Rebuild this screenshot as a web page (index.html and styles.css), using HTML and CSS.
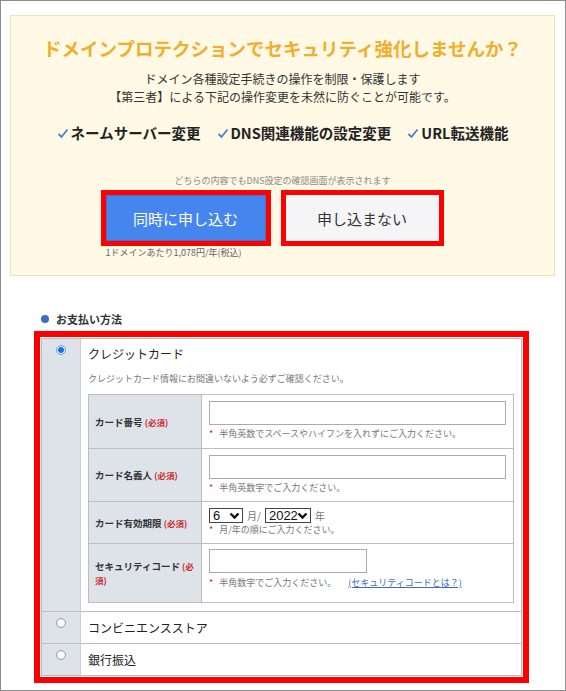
FILE: index.html
```html
<!DOCTYPE html>
<html lang="ja">
<head>
  <meta charset="UTF-8" />
  <meta name="viewport" content="width=device-width, initial-scale=1" />
  <title>ドメインプロテクション / お支払い方法</title>
  <link rel="stylesheet" href="styles.css">
</head>
<body>
  <div class="page">

    <section class="promo">
      <h2 class="promo-title">ドメインプロテクションでセキュリティ強化しませんか？</h2>
      <p class="promo-desc">ドメイン各種設定手続きの操作を制限・保護します<br>【第三者】による下記の操作変更を未然に防ぐことが可能です。</p>

      <ul class="features">
        <li><svg class="check" width="12" height="11" viewBox="0 0 12 11"><path d="M1.5 6 L4.5 9 L10.5 1.5" fill="none" stroke="#4a7fd0" stroke-width="1.8"/></svg>ネームサーバー変更</li>
        <li><svg class="check" width="12" height="11" viewBox="0 0 12 11"><path d="M1.5 6 L4.5 9 L10.5 1.5" fill="none" stroke="#4a7fd0" stroke-width="1.8"/></svg>DNS関連機能の設定変更</li>
        <li><svg class="check" width="12" height="11" viewBox="0 0 12 11"><path d="M1.5 6 L4.5 9 L10.5 1.5" fill="none" stroke="#4a7fd0" stroke-width="1.8"/></svg>URL転送機能</li>
      </ul>

      <p class="promo-note">どちらの内容でもDNS設定の確認画面が表示されます</p>

      <div class="actions">
        <div class="action">
          <div class="highlight">
            <button class="btn btn-primary">同時に申し込む</button>
          </div>
          <p class="price">1ドメインあたり1,078円/年(税込)</p>
        </div>
        <div class="action">
          <div class="highlight">
            <button class="btn btn-secondary">申し込まない</button>
          </div>
        </div>
      </div>
    </section>

    <section class="payment">
      <h3 class="payment-heading">お支払い方法</h3>

      <div class="highlight highlight-lg">
        <table class="pay-table">
          <tr class="pay-row">
            <td class="pay-radio"><input type="radio" name="pay" checked></td>
            <td class="pay-body">
              <div class="pay-title">クレジットカード</div>
              <p class="pay-sub">クレジットカード情報にお間違いないよう必ずご確認ください。</p>

              <table class="card-table">
                <tr class="row-a">
                  <th>カード番号 <span class="req">(必須)</span></th>
                  <td>
                    <input type="text" class="field field-wide">
                    <p class="hint"><span class="star">*</span>半角英数でスペースやハイフンを入れずにご入力ください。</p>
                  </td>
                </tr>
                <tr class="row-b">
                  <th>カード名義人 <span class="req">(必須)</span></th>
                  <td>
                    <input type="text" class="field field-wide">
                    <p class="hint"><span class="star">*</span>半角英数字でご入力ください。</p>
                  </td>
                </tr>
                <tr class="row-c">
                  <th>カード有効期限 <span class="req">(必須)</span></th>
                  <td>
                    <div class="expiry">
                      <span class="select select-month">
                        <select><option>6</option></select>
                        <svg width="11" height="8" viewBox="0 0 11 8"><path d="M1.5 1.5 L5.5 5.5 L9.5 1.5" fill="none" stroke="#111" stroke-width="2.4"/></svg>
                      </span>
                      <span class="unit">月/</span>
                      <span class="select select-year">
                        <select><option>2022</option></select>
                        <svg width="11" height="8" viewBox="0 0 11 8"><path d="M1.5 1.5 L5.5 5.5 L9.5 1.5" fill="none" stroke="#111" stroke-width="2.4"/></svg>
                      </span>
                      <span class="unit">年</span>
                    </div>
                    <p class="hint hint-tight"><span class="star">*</span>月/年の順にご入力ください。</p>
                  </td>
                </tr>
                <tr class="row-d">
                  <th>セキュリティコード <span class="req">(必</span><br><span class="req">須)</span></th>
                  <td>
                    <input type="text" class="field field-short">
                    <p class="hint"><span class="star">*</span>半角数字でご入力ください。<a href="#" class="hint-link">(セキュリティコードとは？)</a></p>
                  </td>
                </tr>
              </table>
            </td>
          </tr>
          <tr class="pay-row pay-row-sub">
            <td class="pay-radio"><input type="radio" name="pay"></td>
            <td class="pay-body">コンビニエンスストア</td>
          </tr>
          <tr class="pay-row pay-row-sub">
            <td class="pay-radio"><input type="radio" name="pay"></td>
            <td class="pay-body">銀行振込</td>
          </tr>
        </table>
      </div>
    </section>

  </div>
</body>
</html>
```

FILE: styles.css
```css
body {
  margin: 0;
  font-family: 'Noto Sans CJK JP', 'Noto Sans', sans-serif;
  color: #333;
  background: #fff;
}

.page {
  height: 691px;
  border: 1px solid #8c8c8c;
  box-sizing: border-box;
  overflow: hidden;
}

/* ドメインプロテクション */
.promo {
  margin: 14px 10px 0 9px;
  padding: 20px 0 16px;
  background: #fff9e6;
  border: 1px solid #f4e3ab;
  text-align: center;
}

.promo-title {
  margin: 0;
  font-size: 18.5px;
  line-height: 24px;
  font-weight: 700;
  color: #f0ae2c;
}

.promo-desc {
  margin: 10px 0 0;
  font-size: 12px;
  line-height: 18px;
  color: #333;
}

.features {
  list-style: none;
  margin: 17px 0 0;
  padding: 0;
  display: flex;
  justify-content: center;
  gap: 16px;
  font-size: 14.5px;
  line-height: 20px;
  font-weight: 700;
  color: #222;
}

.features li {
  display: flex;
  align-items: center;
}

.check {
  margin-right: 2px;
}

.promo-note {
  margin: 31px 0 0;
  font-size: 9px;
  line-height: 14px;
  color: #8a8a8a;
}

.actions {
  display: flex;
  justify-content: center;
  gap: 10px;
  margin-top: 2px;
  padding-right: 21px;
}

.action {
  text-align: left;
}

.highlight {
  border: 5px solid #ff0000;
}

.btn {
  display: block;
  height: 46px;
  border: none;
  font-family: inherit;
  font-size: 15px;
  cursor: pointer;
}

.btn-primary {
  width: 160px;
  background: #4586ee;
  color: #fff;
  border: 1px solid #3d74cf;
}

.btn-secondary {
  width: 153px;
  background: #f5f5f7;
  color: #333;
}

.price {
  margin: 1px 0 0 5px;
  font-size: 9px;
  line-height: 12px;
  color: #666;
}

/* お支払い方法 */
.payment {
  margin: 35px 36px 0 33px;
}

.payment-heading {
  margin: 0 0 4px;
  padding-left: 7px;
  display: flex;
  align-items: center;
  font-size: 11px;
  line-height: 16px;
  font-weight: 700;
  color: #333;
}

.payment-heading::before {
  content: "";
  width: 8px;
  height: 8px;
  border-radius: 50%;
  background: #3b6fc6;
  margin-right: 7px;
}

.highlight-lg {
  border-width: 6px;
  padding: 1px;
}

.pay-table {
  width: 100%;
  border-collapse: collapse;
  border: 1px solid #bdbdbd;
}

.pay-row > td {
  border-top: 1px solid #bdbdbd;
}

.pay-radio {
  width: 38px;
  padding: 6px 0 0;
  vertical-align: top;
  text-align: center;
  background: #dee2e9;
  border-right: 1px solid #c9cdd4;
}

.pay-body {
  padding: 6px 7px 8px;
  vertical-align: top;
  font-size: 12px;
  color: #222;
}

.pay-title {
  font-size: 12px;
  line-height: 18px;
}

.pay-sub {
  margin: 9px 0 0;
  font-size: 9px;
  line-height: 14px;
  color: #777;
}

.pay-row-sub .pay-radio {
  padding-top: 6px;
}

.pay-row-sub .pay-body {
  height: 32px;
  padding: 0 7px;
  box-sizing: border-box;
  vertical-align: middle;
  line-height: 18px;
}

input[type="radio"] {
  appearance: none;
  width: 10px;
  height: 10px;
  margin: 0;
  border: 1px solid #9c9c9c;
  border-radius: 50%;
  background: radial-gradient(circle, #fff 0, #fff 40%, #e6e6e6 100%);
  display: inline-block;
  vertical-align: top;
}

input[type="radio"]:checked {
  border-color: #6fa0e6;
  background: radial-gradient(circle, #1d6fe0 0, #1d6fe0 2.6px, #dbe9fb 3.2px, #fff 100%);
}

/* カード情報 */
.card-table {
  width: 100%;
  margin-top: 8px;
  border-collapse: collapse;
  border: 1px solid #bdbdbd;
}

.card-table th,
.card-table td {
  border: 1px solid #bdbdbd;
}

.card-table th {
  width: 101px;
  padding: 0 6px;
  background: #dee2e9;
  text-align: left;
  font-size: 9.5px;
  line-height: 14px;
  font-weight: 700;
  color: #333;
  vertical-align: middle;
}

.req {
  color: #cc2a2a;
  font-size: 8.5px;
}

.card-table td {
  padding: 6px 7px 7px;
  vertical-align: top;
}

.row-a td { height: 40px; }
.row-b td { height: 39px; }
.row-c td { height: 28px; }
.row-d td { height: 46px; padding-top: 5px; }

.field {
  display: block;
  height: 24px;
  box-sizing: border-box;
  border: 1px solid #ababab;
  background: #fff;
  margin: 0;
}

.field-wide {
  width: 297px;
}

.field-short {
  width: 158px;
}

.hint {
  margin: 3px 0 0;
  font-size: 9px;
  line-height: 12px;
  color: #777;
}

.hint-tight {
  margin-top: 1px;
}

.row-d .hint {
  margin-top: 4px;
}

.star {
  color: #d02525;
  margin-right: 6px;
}

.hint-link {
  margin-left: 12px;
  color: #3a6cc0;
}

.expiry {
  display: flex;
  align-items: center;
  height: 15px;
  font-size: 10px;
  color: #777;
}

.select {
  position: relative;
  display: inline-block;
  height: 15px;
}

.select select {
  appearance: none;
  height: 15px;
  margin: 0;
  padding: 0 0 0 3px;
  border: 1px solid #444;
  border-radius: 0;
  background: #fff;
  font-family: 'Liberation Sans', sans-serif;
  font-size: 13px;
  line-height: 13px;
  color: #111;
}

.select svg {
  position: absolute;
  right: 3px;
  top: 4px;
  pointer-events: none;
}

.select-month select {
  width: 34px;
}

.select-year select {
  width: 46px;
}

.unit {
  margin: 0 4px 0 4px;
}
```
